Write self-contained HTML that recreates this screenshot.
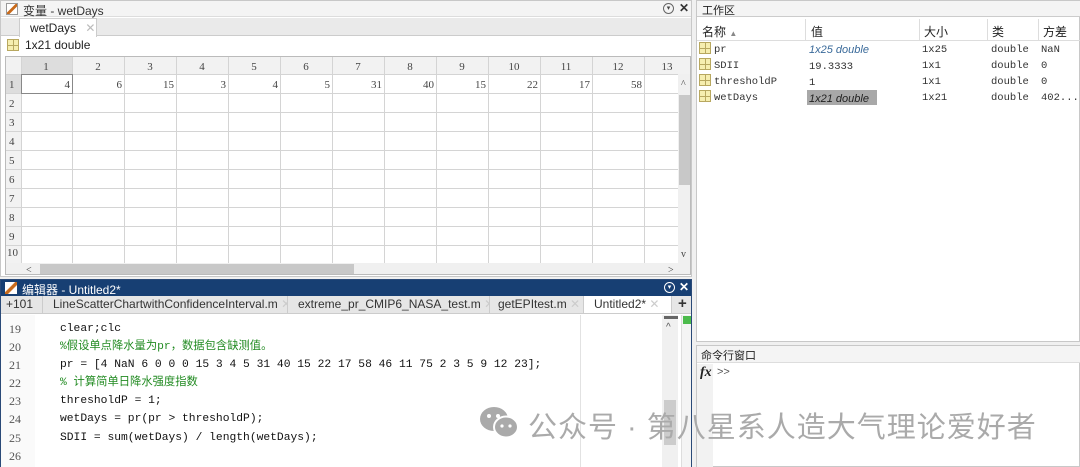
<!DOCTYPE html>
<html><head><meta charset="utf-8"><style>
*{margin:0;padding:0;box-sizing:border-box}
html,body{width:1080px;height:467px;overflow:hidden}
body{background:#f0f0f0;font-family:"Liberation Sans","Noto Sans CJK SC",sans-serif;font-size:12px;color:#222;position:relative}
.abs{position:absolute}
.mono{font-family:"Liberation Mono","Noto Sans CJK SC",monospace}
.ico{width:12px;height:12px;border:1px solid #b8a860;background:linear-gradient(#b8a860,#b8a860) 5px 0/1px 100% no-repeat,linear-gradient(#b8a860,#b8a860) 0 5px/100% 1px no-repeat,#f6eeb0}
.tab{position:absolute;top:0;height:18px;border-left:1px solid #ccc;white-space:nowrap;overflow:hidden}
</style></head><body>
<!-- variable panel -->
<div class="abs" style="left:0;top:0;width:692px;height:277px;background:#fff;border:1px solid #c8c8c8"></div>
<div class="abs" style="left:1px;top:1px;width:690px;height:16px;background:#f4f4f4;border-bottom:1px solid #ddd"></div>
<div class="abs" style="left:6px;top:3px;width:12px;height:12px;background:linear-gradient(135deg,#fff 40%,#c86a1a 45%,#c86a1a 60%,#fff 65%);border:1px solid #999"></div>
<div class="abs" style="left:23px;top:2px;font-size:12px;color:#333">变量 - wetDays</div>
<div class="abs" style="left:663px;top:3px;width:11px;height:11px;border:1px solid #666;border-radius:50%;font-size:7px;text-align:center;line-height:9px;color:#444">▾</div>
<div class="abs" style="left:679px;top:1px;font-size:12px;font-weight:bold;color:#333">✕</div>
<div class="abs" style="left:1px;top:18px;width:690px;height:18px;background:#eaeaea;border-bottom:1px solid #ccc"></div>
<div class="abs" style="left:19px;top:18px;width:78px;height:19px;background:#fff;border:1px solid #ccc;border-bottom:none;padding:2px 0 0 10px;font-size:12px;white-space:nowrap">wetDays <span style="color:#bbb;margin-left:6px">✕</span></div>
<div class="abs ico" style="left:7px;top:39px"></div>
<div class="abs" style="left:25px;top:38px;font-size:12px">1x21 double</div>
<!-- grid -->
<div class="abs" style="left:5px;top:56px;width:686px;height:219px;border:1px solid #bbb;background:#fff;overflow:hidden">
<svg width="686" height="219" style="position:absolute;left:0;top:0" font-family="Liberation Serif,serif" font-size="11" fill="#444">
<rect x="0" y="0" width="686" height="17" fill="#f2f2f2"/>
<rect x="0" y="0" width="15" height="219" fill="#f2f2f2"/>
<rect x="15" y="0" width="51" height="17" fill="#ddd"/>
<rect x="0" y="17" width="15" height="19" fill="#ddd"/>
<g stroke="#d4d4d4" stroke-width="1">
<line x1="66.5" y1="0" x2="66.5" y2="206"/><line x1="118.5" y1="0" x2="118.5" y2="206"/><line x1="170.5" y1="0" x2="170.5" y2="206"/><line x1="222.5" y1="0" x2="222.5" y2="206"/><line x1="274.5" y1="0" x2="274.5" y2="206"/><line x1="326.5" y1="0" x2="326.5" y2="206"/><line x1="378.5" y1="0" x2="378.5" y2="206"/><line x1="430.5" y1="0" x2="430.5" y2="206"/><line x1="482.5" y1="0" x2="482.5" y2="206"/><line x1="534.5" y1="0" x2="534.5" y2="206"/><line x1="586.5" y1="0" x2="586.5" y2="206"/><line x1="638.5" y1="0" x2="638.5" y2="206"/><line x1="15.5" y1="0" x2="15.5" y2="206"/>
<line x1="0" y1="17.5" x2="672" y2="17.5"/><line x1="0" y1="36.5" x2="672" y2="36.5"/><line x1="0" y1="55.5" x2="672" y2="55.5"/><line x1="0" y1="74.5" x2="672" y2="74.5"/><line x1="0" y1="93.5" x2="672" y2="93.5"/><line x1="0" y1="112.5" x2="672" y2="112.5"/><line x1="0" y1="131.5" x2="672" y2="131.5"/><line x1="0" y1="150.5" x2="672" y2="150.5"/><line x1="0" y1="169.5" x2="672" y2="169.5"/><line x1="0" y1="188.5" x2="672" y2="188.5"/>
</g>
<rect x="15.5" y="17.5" width="51" height="19" fill="none" stroke="#888"/>
<g text-anchor="middle"><text x="40" y="13">1</text><text x="92" y="13">2</text><text x="144" y="13">3</text><text x="196" y="13">4</text><text x="248" y="13">5</text><text x="300" y="13">6</text><text x="352" y="13">7</text><text x="404" y="13">8</text><text x="456" y="13">9</text><text x="508" y="13">10</text><text x="560" y="13">11</text><text x="612" y="13">12</text><text x="661" y="13">13</text></g>
<g><text x="3" y="31">1</text><text x="3" y="50">2</text><text x="3" y="69">3</text><text x="3" y="88">4</text><text x="3" y="107">5</text><text x="3" y="126">6</text><text x="3" y="145">7</text><text x="3" y="164">8</text><text x="3" y="183">9</text><text x="1" y="199">10</text></g>
<g text-anchor="end"><text x="64" y="31">4</text><text x="116" y="31">6</text><text x="168" y="31">15</text><text x="220" y="31">3</text><text x="272" y="31">4</text><text x="324" y="31">5</text><text x="376" y="31">31</text><text x="428" y="31">40</text><text x="480" y="31">15</text><text x="532" y="31">22</text><text x="584" y="31">17</text><text x="636" y="31">58</text></g>
<rect x="672" y="17" width="14" height="189" fill="#f0f0f0"/>
<rect x="673" y="38" width="12" height="90" fill="#c8c8c8"/>
<text x="675" y="30" font-size="10">^</text><text x="675" y="200" font-size="10">v</text>
<rect x="0" y="206" width="686" height="13" fill="#f0f0f0"/>
<rect x="34" y="207" width="314" height="11" fill="#c8c8c8"/>
<text x="20" y="216" font-size="10">&lt;</text><text x="662" y="216" font-size="10">&gt;</text>
</svg></div>

<!-- editor -->
<div class="abs" style="left:0;top:279px;width:692px;height:188px;background:#fff;border:1px solid #2a4a78;border-bottom:none"></div>
<div class="abs" style="left:1px;top:280px;width:690px;height:16px;background:#173f73"></div>
<div class="abs" style="left:5px;top:282px;width:12px;height:12px;background:linear-gradient(135deg,#fff 40%,#c86a1a 45%,#c86a1a 60%,#fff 65%)"></div>
<div class="abs" style="left:22px;top:281px;color:#fff;font-size:12px">编辑器 - Untitled2*</div>
<div class="abs" style="left:664px;top:282px;width:11px;height:11px;border:1px solid #fff;border-radius:50%;font-size:7px;color:#fff;text-align:center;line-height:9px">▾</div>
<div class="abs" style="left:679px;top:280px;color:#fff;font-weight:bold">✕</div>
<div class="abs" style="left:1px;top:296px;width:690px;height:18px;background:#e6e6e6;border-bottom:1px solid #ccc;font-size:12px;color:#333;overflow:hidden">
<span class="abs" style="left:5px;top:1px">+101</span>
<span class="tab" style="left:41px;padding:1px 0 0 10px;width:245px">LineScatterChartwithConfidenceInterval.m <span style="color:#ccc">✕</span></span>
<span class="tab" style="left:286px;padding:1px 0 0 10px;width:202px">extreme_pr_CMIP6_NASA_test.m <span style="color:#ccc">✕</span></span>
<span class="tab" style="left:488px;padding:1px 0 0 8px;width:94px">getEPItest.m <span style="color:#ccc">✕</span></span>
<span class="tab" style="left:582px;height:19px;background:#fff;border-right:1px solid #ccc;padding:1px 0 0 10px;width:89px">Untitled2* <span style="color:#ccc">✕</span></span>
<span class="abs" style="left:677px;top:-1px;font-size:15px;font-weight:bold">+</span>
</div>
<div class="abs" style="left:1px;top:315px;width:34px;height:152px;background:#fafafa"></div>
<div class="abs" style="left:580px;top:315px;width:1px;height:152px;background:#e2e2e2"></div>
<div class="abs" style="left:662px;top:315px;width:16px;height:152px;background:#f0f0f0"></div>
<div class="abs" style="left:664px;top:400px;width:12px;height:45px;background:#ccc"></div>
<div class="abs" style="left:681px;top:315px;width:10px;height:152px;background:#f4f4f4;border-left:1px solid #ddd"></div>
<div class="abs" style="left:683px;top:316px;width:8px;height:8px;background:#4cbb4c"></div>
<div class="abs" style="left:664px;top:316px;width:14px;height:3px;background:#666"></div>
<div class="abs" style="left:666px;top:322px;font-size:10px;color:#555">^</div>
<div class="abs" style="left:9px;top:320px;font-size:12px;line-height:18.1px;color:#555;font-family:'Liberation Serif',serif">19<br>20<br>21<br>22<br>23<br>24<br>25<br>26</div>
<div class="abs mono" style="left:60px;top:320px;font-size:11.3px;line-height:18.1px;color:#111;white-space:pre">clear;clc
<span style="color:#228b22">%假设单点降水量为pr，数据包含缺测值。</span>
pr = [4 NaN 6 0 0 0 15 3 4 5 31 40 15 22 17 58 46 11 75 2 3 5 9 12 23];
<span style="color:#228b22">% 计算简单日降水强度指数</span>
thresholdP = 1;
wetDays = pr(pr &gt; thresholdP);
SDII = sum(wetDays) / length(wetDays);
</div>

<!-- workspace -->
<div class="abs" style="left:696px;top:0;width:384px;height:342px;background:#fff;border:1px solid #c8c8c8"></div>
<div class="abs" style="left:697px;top:1px;width:383px;height:16px;background:#f4f4f4;border-bottom:1px solid #ccc;padding:1px 0 0 5px;font-size:11px">工作区</div>
<div class="abs" style="left:697px;top:19px;width:383px;height:22px;border-bottom:1px solid #ddd;font-size:12px">
<span class="abs" style="left:5px;top:4px">名称 <span style="font-size:8px;color:#888">▲</span></span>
<span class="abs" style="left:108px;top:0;height:22px;border-left:1px solid #ddd;padding:4px 0 0 5px">值</span>
<span class="abs" style="left:222px;top:0;height:22px;border-left:1px solid #ddd;padding:4px 0 0 4px">大小</span>
<span class="abs" style="left:290px;top:0;height:22px;border-left:1px solid #ddd;padding:4px 0 0 4px">类</span>
<span class="abs" style="left:341px;top:0;height:22px;border-left:1px solid #ddd;padding:4px 0 0 4px">方差</span>
</div>
<div class="abs" style="left:697px;top:41px;font-family:'Liberation Mono',monospace;font-size:10.5px;color:#333">
<div class="abs ico" style="left:2px;top:1px"></div><div class="abs ico" style="left:2px;top:17px"></div><div class="abs ico" style="left:2px;top:33px"></div><div class="abs ico" style="left:2px;top:49px"></div>
<div class="abs" style="left:17px;top:1px;line-height:16px;width:100px">pr<br>SDII<br>thresholdP<br>wetDays</div>
<div class="abs" style="left:110px;top:49px;width:70px;height:15px;background:#a8a8a8"></div>
<div class="abs" style="left:112px;top:1px;line-height:16px;width:110px"><span style="font-family:'Liberation Sans';font-style:italic;color:#3a6a9a;font-size:11px">1x25 double</span><br>19.3333<br>1<br><span style="font-family:'Liberation Sans';font-style:italic;color:#222;font-size:11px">1x21 double</span></div>
<div class="abs" style="left:225px;top:1px;line-height:16px;width:60px">1x25<br>1x1<br>1x1<br>1x21</div>
<div class="abs" style="left:294px;top:1px;line-height:16px;width:60px">double<br>double<br>double<br>double</div>
<div class="abs" style="left:344px;top:1px;line-height:16px;width:60px">NaN<br>0<br>0<br>402...</div>
</div>
<!-- command window -->
<div class="abs" style="left:696px;top:345px;width:384px;height:122px;background:#fff;border:1px solid #c8c8c8"></div>
<div class="abs" style="left:697px;top:346px;width:383px;height:17px;background:#f4f4f4;border-bottom:1px solid #ddd;padding:1px 0 0 4px;font-size:11px">命令行窗口</div>
<div class="abs" style="left:697px;top:364px;width:16px;height:103px;background:#f2f2f2"></div>
<div class="abs" style="left:700px;top:365px;font-family:'Liberation Serif',serif;font-style:italic;font-weight:bold;font-size:14px">fx</div>
<div class="abs" style="left:717px;top:366px;font-size:11px;color:#555">&gt;&gt;</div>

<!-- watermark -->
<svg class="abs" style="left:478px;top:405px" width="44" height="36" viewBox="0 0 44 36">
<ellipse cx="16" cy="14" rx="14" ry="12" fill="#aaa"/><ellipse cx="28" cy="22" rx="12" ry="10.5" fill="#aaa" stroke="#fff" stroke-width="2"/>
<circle cx="11" cy="11" r="2" fill="#fff"/><circle cx="20" cy="11" r="2" fill="#fff"/><circle cx="24" cy="21" r="1.6" fill="#fff"/><circle cx="32" cy="21" r="1.6" fill="#fff"/></svg>
<div class="abs" style="left:528px;top:404px;font-size:29px;color:#aaa;letter-spacing:1px;white-space:nowrap">公众号 · 第八星系人造大气理论爱好者</div>
</body></html>
